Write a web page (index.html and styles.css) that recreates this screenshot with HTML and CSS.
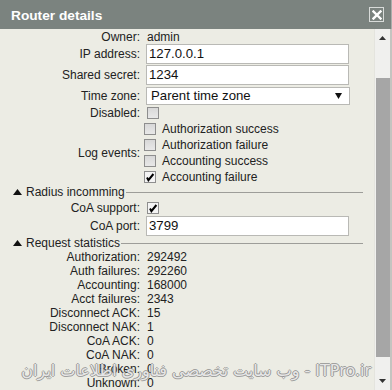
FILE: index.html
```html
<!DOCTYPE html>
<html>
<head>
<meta charset="utf-8">
<link rel="stylesheet" href="styles.css">
</head>
<body>
<div class="window">
  <div class="titlebar">
    <span class="title">Router details</span>
    <span class="close"><svg width="10" height="10" viewBox="0 0 10 10"><path d="M1.5 1.5 L8.5 8.5 M8.5 1.5 L1.5 8.5" stroke="#fff" stroke-width="2.4" stroke-linecap="square"/></svg></span>
  </div>
  <div class="body">
    <div class="content">
      <div class="row h15"><span class="lbl">Owner:</span><span class="val">admin</span></div>
      <div class="row h21 top"><span class="lbl">IP address:</span><span class="input">127.0.0.1</span></div>
      <div class="row h21 top"><span class="lbl">Shared secret:</span><span class="input">1234</span></div>
      <div class="row h18 top"><span class="lbl sel">Time zone:</span><span class="select"><span>Parent time zone</span><svg width="7" height="6" viewBox="0 0 7 6"><path d="M0 0 H7 L3.5 6 Z" fill="#111"/></svg></span></div>
      <div class="row h17"><span class="lbl">Disabled:</span><span class="cb"></span></div>
      <div class="row group">
        <span class="lbl">Log events:</span>
        <div class="checks">
          <div class="check"><span class="cb"></span><span>Authorization success</span></div>
          <div class="check"><span class="cb"></span><span>Authorization failure</span></div>
          <div class="check"><span class="cb"></span><span>Accounting success</span></div>
          <div class="check"><span class="cb checked"><svg width="10" height="10" viewBox="0 0 10 10"><path d="M2 5.5 L3.4 8.2 L8.4 2" fill="none" stroke="#000" stroke-width="2"/></svg></span><span>Accounting failure</span></div>
        </div>
      </div>
      <div class="section"><svg class="tri" width="9" height="6" viewBox="0 0 9 6"><path d="M0 6 L4.5 0 L9 6 Z" fill="#111"/></svg><span>Radius incomming</span><span class="rule"></span></div>
      <div class="row h17"><span class="lbl">CoA support:</span><span class="cb checked"><svg width="10" height="10" viewBox="0 0 10 10"><path d="M2 5.5 L3.4 8.2 L8.4 2" fill="none" stroke="#000" stroke-width="2"/></svg></span></div>
      <div class="row h20 top"><span class="lbl">CoA port:</span><span class="input">3799</span></div>
      <div class="section"><svg class="tri" width="9" height="6" viewBox="0 0 9 6"><path d="M0 6 L4.5 0 L9 6 Z" fill="#111"/></svg><span>Request statistics</span><span class="rule"></span></div>
      <div class="stats">
        <div class="row h14"><span class="lbl">Authorization:</span><span class="val">292492</span></div>
        <div class="row h14"><span class="lbl">Auth failures:</span><span class="val">292260</span></div>
        <div class="row h14"><span class="lbl">Accounting:</span><span class="val">168000</span></div>
        <div class="row h14"><span class="lbl">Acct failures:</span><span class="val">2343</span></div>
        <div class="row h14"><span class="lbl">Disconnect ACK:</span><span class="val">15</span></div>
        <div class="row h14"><span class="lbl">Disconnect NAK:</span><span class="val">1</span></div>
        <div class="row h14"><span class="lbl">CoA ACK:</span><span class="val">0</span></div>
        <div class="row h14"><span class="lbl">CoA NAK:</span><span class="val">0</span></div>
        <div class="row h14"><span class="lbl">Broken:</span><span class="val">0</span></div>
        <div class="row h14"><span class="lbl">Unknown:</span><span class="val">0</span></div>
      </div>
    </div>
    <div class="scrollbar">
      <div class="arrow"><svg width="7" height="4" viewBox="0 0 7 4"><path d="M0 4 L3.5 0 L7 4 Z" fill="#333"/></svg></div>
      <div class="track"><div class="thumb"></div></div>
      <div class="arrow"><svg width="7" height="4" viewBox="0 0 7 4"><path d="M0 0 H7 L3.5 4 Z" fill="#333"/></svg></div>
    </div>
  </div>
  <div class="watermark">ITPro.ir - وب سایت تخصصی فناوری اطلاعات ایران</div>
</div>
</body>
</html>
```
FILE: styles.css
```css
html, body {
  margin: 0;
  padding: 0;
  background: #ecece4;
}
.window {
  position: relative;
  width: 392px;
  height: 390px;
  overflow: hidden;
  font-family: "Liberation Sans", Arial, sans-serif;
  font-size: 12px;
  color: #222;
  background: #ecece4;
}
.titlebar {
  height: 29px;
  background: #7b837f;
  display: flex;
  align-items: center;
  justify-content: space-between;
  padding: 0 7px 0 11px;
  border-right: 1px solid #a9aeab;
}
.title {
  color: #fff;
  font-weight: bold;
  font-size: 13.7px;
  margin-top: 1px;
}
.close {
  width: 13px;
  height: 13px;
  border: 1px solid #d8dbd9;
  display: flex;
  align-items: center;
  justify-content: center;
}
.body {
  display: flex;
  height: 361px;
}
.content {
  width: 374px;
  background: #ecece4;
}
.row {
  display: grid;
  grid-template-columns: 140px 1fr;
  column-gap: 6px;
  align-items: center;
}
.row.top { align-items: start; }
.row.top .lbl { line-height: 20px; }
.row.top .lbl.sel { line-height: 20px; }
.h14 { height: 14px; line-height: 14px; }
.h15 { height: 15px; }
.h16 { height: 16px; }
.h17 { height: 17px; }
.h18 { height: 18px; }
.h20 { height: 20px; }
.h21 { height: 21px; }
.lbl {
  text-align: right;
}
.val { padding-left: 1px; }
.input {
  box-sizing: border-box;
  width: 203px;
  height: 20px;
  background: #fff;
  border: 1px solid #b9b9b5;
  font-size: 13.2px;
  line-height: 18px;
  padding-left: 2px;
  color: #111;
}
.select {
  box-sizing: border-box;
  width: 204px;
  height: 18px;
  margin-top: 1px;
  background: #fff;
  border: 1px solid #b9b9b5;
  font-size: 13.2px;
  line-height: 16px;
  padding: 0 7px 0 4px;
  color: #111;
  display: flex;
  align-items: center;
  justify-content: space-between;
}
.cb {
  box-sizing: border-box;
  width: 12px;
  height: 12px;
  border: 1px solid #8e8e8e;
  background: linear-gradient(#d8d8d8, #e8e8e8);
  display: flex;
  align-items: center;
  justify-content: center;
  margin-left: 1px;
}
.cb.checked { background: #f4f4f4; }
.group { height: 64px; }
.checks {
  display: flex;
  flex-direction: column;
  margin-left: -2px;
}
.check {
  height: 16px;
  display: flex;
  align-items: center;
  gap: 6px;
}
.check .cb { margin-left: 0; }
.section {
  height: 14px;
  display: flex;
  align-items: center;
  padding-left: 13px;
  margin-right: 11px;
}
.section .tri { margin-right: 4px; }
.rule {
  flex: 1;
  height: 1px;
  background: #9d9d99;
  margin-left: 1px;
}
.scrollbar {
  width: 15px;
  background: #f0f0ee;
  border-left: 1px solid #e4e4de;
  border-right: 2px solid #c4c4c0;
  display: flex;
  flex-direction: column;
}
.arrow {
  height: 18px;
  display: flex;
  align-items: center;
  justify-content: center;
}
.track {
  flex: 1;
  padding: 31px 0 15px 1px;
  display: flex;
}
.thumb {
  width: 13px;
  background: #a6a6a6;
  flex: 1;
}
.watermark {
  position: absolute;
  right: 21px;
  top: 361px;
  direction: rtl;
  font-family: "DejaVu Sans", "Liberation Sans", sans-serif;
  font-size: 16px;
  white-space: nowrap;
  color: rgba(255, 255, 255, 0.8);
  text-shadow: 1px 0 rgba(140,140,140,0.8), -1px 0 rgba(140,140,140,0.8), 0 1px rgba(140,140,140,0.8), 0 -1px rgba(140,140,140,0.8);
  pointer-events: none;
}
```
